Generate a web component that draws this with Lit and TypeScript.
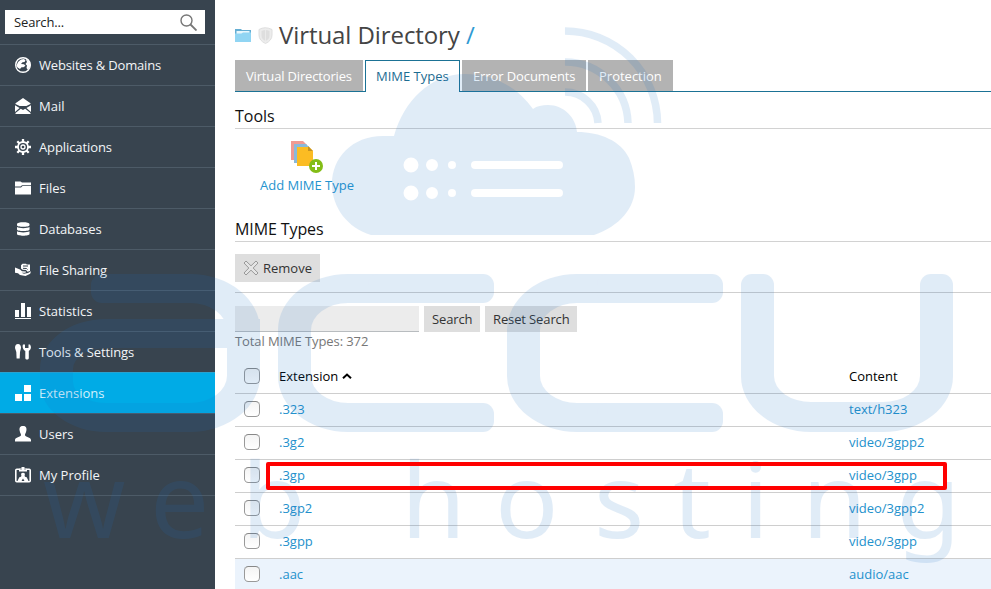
import { LitElement, html, css, svg } from "lit";
import { customElement } from "lit/decorators.js";
import { classMap } from "lit/directives/class-map.js";

const icons: Record<string, unknown> = {
  globe: svg`<circle cx="8" cy="8" r="7.300" fill="none" stroke="#fff" stroke-width="1.400"/><path d="M1.500 8.500L3 5l3-2.500 3-.5 1.500 1.500-1 1.500-2 .3-1.500 1.700 3 .3 1.500 1.500-2 1.500h-2L5 12l-2.500-1.500zM10.500 1.500L15 5l.5 4-2.500 4-1.500-2 .5-2.500-1.500-1.500 1.500-2z"/>`,
  mail: svg`<path d="M8 0L15.500 5.200V6L11.400 8H4.600L.5 6V5.200zM0 7.200L4.600 10 0 14zM16 7.200L11.400 10 16 14zM5.800 10.700L8 12l2.200-1.300L15.500 15v1H.5v-1z"/>`,
  gear: svg`<circle cx="8" cy="8" r="5" fill="none" stroke="#fff" stroke-width="1.800"/><circle cx="8" cy="8" r="2" fill="none" stroke="#fff" stroke-width="1.300"/><path d="M8 0v3M8 13v3M0 8h3M13 8h3M2.300 2.300l2.200 2.200M11.500 11.500l2.200 2.200M2.300 13.700l2.200-2.200M11.500 4.500l2.200-2.200" stroke="#fff" stroke-width="2.300"/>`,
  folder: svg`<path d="M0 1.500h5.500L7 2.500h9v2.700H7L5.500 6.500H0zM0 7.500h6L7.500 6H16v8.500H0z"/>`,
  database: svg`<path d="M2 3C2 .5 14.500.5 14.500 3v1.200c0 2-12.500 2-12.500 0zM2 6c2 1.500 10.500 1.500 12.500 0v2.500c0 2-12.500 2-12.500 0zM2 10.300c2 1.500 10.500 1.500 12.500 0V13c0 2.300-12.500 2.300-12.500 0z"/>`,
  share: svg`<path d="M0 5.500l5 2 2 1.700 4 .3-.5 1.200H6.500L9 11.800l4-.8 3-1.700-.8 2.500-4.700 2.200L5 13l-2-1.800L0 10.800z"/><path d="M6 3.300l1.500-1.500H11l.8.700H15v6.500l-2.500.8L11 8 7.500 7.800 6 6.500z"/><path d="M8 4h5M8 6.300l3.500.2 1 1" stroke="#38444f" fill="none"/>`,
  stats: svg`<path d="M0 7h4v7H0zM6 0h4v14H6zM12 4h4v10h-4zM0 15h16v1H0z"/>`,
  tools: svg`<path d="M3 0c2 0 3.200 1.800 3 4L5 8l-.3 6.500H1.600L1.300 8 0 4C0 1.500 1 0 3 0zM8 .5l2 0v3.500h3.500V.5H15c2 3 .5 5.500-1.200 6.500v7c0 2-3.500 2-3.500 0V7C8 5.500 7 3 8 .5z"/>`,
  blocks: svg`<path d="M9 0h7v7H9zM0 9h7v7H0zM9 9h7v7H9z"/>`,
  user: svg`<path d="M8 0c3 0 3.800 2 3.400 4.500C11 7 10 7.500 10 9c0 2 6 2 6 5v1.500H0V14c0-3 6-3 6-5 0-1.500-1-2-1.400-4.500C4.200 2 5 0 8 0z"/>`,
  profile: svg`<rect x=".8" y="2.300" width="14.400" height="12.500" rx="1" fill="none" stroke="#fff" stroke-width="1.600"/><path d="M4 1.800h2.500V0h3v1.800H12v2.700H4z"/><path d="M5.500 2.200h1M9.500 2.200h1" stroke="#38444f" stroke-width=".8"/><path d="M8 5.800c1.800 0 2.200 1.200 1.700 2.500-.4 1.200.3 1.500 2 2l1.800 3.700H9.500L8 11.500 6.500 14h-4l1.800-3.700c1.700-.5 2.400-.8 2-2C5.800 7 6.200 5.800 8 5.800z"/>`,
};

const nav: [string, string, string][] = [
  ["globe", "Websites & Domains", "tight"],
  ["mail", "Mail", ""],
  ["gear", "Applications", "snug"],
  ["folder", "Files", ""],
  ["database", "Databases", "snug"],
  ["share", "File Sharing", "tight"],
  ["stats", "Statistics", ""],
  ["tools", "Tools & Settings", "snug"],
  ["blocks", "Extensions", ""],
  ["user", "Users", ""],
  ["profile", "My Profile", ""],
];

const rows = [
  [".323", "text/h323"],
  [".3g2", "video/3gpp2"],
  [".3gp", "video/3gpp"],
  [".3gp2", "video/3gpp2"],
  [".3gpp", "video/3gpp"],
  [".aac", "audio/aac"],
];

@customElement("side-nav")
class SideNav extends LitElement {
  static styles = css`
    :host { display: block; box-sizing: border-box; width: 215px; flex: none; background: #38444f; padding-top: 10px; }
    .search { display: flex; align-items: center; justify-content: space-between; box-sizing: border-box; width: 200px; height: 24px; margin: 0 0 10px 5px; padding: 0 8px 0 9px; background: #fff; color: #222; letter-spacing: -0.15px; }
    .item { display: flex; align-items: center; box-sizing: border-box; height: 41px; padding-left: 15px; gap: 8px; border-top: 1px solid #4d5b67; color: #f3f5f7; }
    .item svg { width: 16px; height: 16px; fill: #fff; }
    .item.active { background: #00abe6; border-color: #29a2cf; color: #d2f1fc; }
    .tight { letter-spacing: -0.17px; }
    .snug { letter-spacing: -0.1px; }
    .end { border-top: 1px solid #4d5b67; }
  `;
  render() {
    return html`
      <div class="search"><span>Search...</span>
        <svg width="17" height="17" viewBox="0 0 17 17" fill="none" stroke="#777"><circle cx="6.500" cy="6.500" r="5.500" stroke-width="1.400"/><path d="M10.500 10.500l6 6" stroke-width="1.800"/></svg>
      </div>
      ${nav.map(([icon, label, fit]) => html`<div class=${classMap({ item: true, active: label === "Extensions" })}>
        <svg viewBox="0 0 16 16">${icons[icon]}</svg><span class=${fit}>${label}</span></div>`)}
      <div class="end"></div>`;
  }
}

@customElement("brand-watermark")
class BrandWatermark extends LitElement {
  static styles = css`
    :host { position: absolute; inset: 0; overflow: hidden; opacity: 0.13; pointer-events: none; color: #1b70c4; }
    svg { position: absolute; inset: 0; }
    .tagline { font-family: "Noto Sans", sans-serif; font-size: 105px; fill: currentColor; }
    .mark { position: absolute; top: 274px; height: 158px; }
    .mark div { position: absolute; box-sizing: border-box; border: 0 solid currentColor; }
    .m1 { left: 40px; width: 220px; }
    .m2 { left: 278px; width: 216px; }
    .m3 { left: 507px; width: 216px; }
    .m4 { left: 741px; width: 212px; }
    .bar { background: currentColor; height: 29px; left: 90px; right: 0; border-radius: 11px; }
    .bar.low { bottom: 0; }
    .hook { left: 0; top: 0; bottom: 0; width: 150px; }
    .mark .hook { border-width: 29px 0 29px 33px; border-radius: 70px 0 0 70px / 56px 0 0 56px; }
    .bowl { left: 0; top: 45px; right: 0; bottom: 0; }
    .mark .bowl { border-width: 29px 33px; border-radius: 66px 0 70px 66px / 50px 0 56px 50px; }
    .roof { left: 90px; top: 0; right: 0; height: 80px; }
    .mark .roof { border-width: 29px 33px 0 0; border-radius: 0 70px 0 0 / 0 56px 0 0; }
    .mark .cap { left: 51px; right: auto; width: 80px; }
    .cup { left: 0; right: 0; top: 50px; bottom: 0; }
    .mark .cup { border-width: 0 33px 30px; border-radius: 0 0 70px 70px / 0 0 56px 56px; }
    .post { background: currentColor; top: 0; width: 33px; height: 90px; border-radius: 11px 11px 0 0; }
    .post.r { right: 0; }
  `;
  render() {
    return html`
      <svg width="991" height="589" fill="currentColor">
        <path fill-rule="evenodd" d="M394 136C404 101 430 74 465 74C495 74 518 88 533 109C537 106 542 105 548 105C564 105 576 118 577 132C600 132 621 141 629 158C633 168 635 177 635 187C635 208 620 226 594 235H371C348 228 332 208 332 184C332 158 352 136 383 136Z
          M403.500 165a7.500 7.500 0 1 0 15 0a7.500 7.500 0 1 0-15 0zM426 165a6 6 0 1 0 12 0a6 6 0 1 0-12 0zM448 165a4 4 0 1 0 8 0a4 4 0 1 0-8 0zM475 161h84a4 4 0 0 1 0 8h-84a4 4 0 0 1 0-8z
          M403.500 193a7.500 7.500 0 1 0 15 0a7.500 7.500 0 1 0-15 0zM426 193a6 6 0 1 0 12 0a6 6 0 1 0-12 0zM448 193a4 4 0 1 0 8 0a4 4 0 1 0-8 0zM475 189h84a4 4 0 0 1 0 8h-84a4 4 0 0 1 0-8z"/>
        <g fill="none" stroke="currentColor" stroke-width="7.500"><path d="M565 31A92.500 92.500 0 0 1 657.500 123M565 62A63 63 0 0 1 628 123M565 92A33 33 0 0 1 598 123"/></g>
        <text class="tagline" y="538" x="43 150 241.500">web</text><text class="tagline" y="538" x="401 495 594 673 742 802 896">hosting</text>
      </svg>
      <div class="mark m1"><div class="bar cap"></div><div class="roof"></div><div class="bowl"></div></div>
      <div class="mark m2"><div class="hook"></div><div class="bar"></div><div class="bar low"></div></div>
      <div class="mark m3"><div class="hook"></div><div class="bar"></div><div class="bar low"></div></div>
      <div class="mark m4"><div class="post"></div><div class="post r"></div><div class="cup"></div></div>`;
  }
}

@customElement("app-root")
class AppRoot extends LitElement {
  static styles = css`
    :host { display: flex; position: relative; width: 991px; height: 589px; overflow: hidden; background: #fff; font: 13px/18px "Open Sans", sans-serif; color: #222; }
    main { flex: 1; min-width: 0; padding-left: 20px; }
    .title { display: flex; align-items: center; height: 60px; padding-top: 10px; box-sizing: border-box; font-size: 24px; line-height: 34px; letter-spacing: -0.08px; color: #444; white-space: pre; }
    .title svg { flex: none; }
    .title .shield { margin: 0 6px 0 6px; }
    .slash { color: #2f9ad3; }
    .tabs { display: flex; gap: 2px; height: 32px; box-sizing: border-box; border-bottom: 1px solid #1b7295; }
    .tab { box-sizing: border-box; height: 31px; padding: 7px 0 0 11px; background: #b3b3b3; color: #fff; white-space: nowrap; letter-spacing: -0.1px; }
    .tab.first { width: 128px; letter-spacing: -0.16px; }
    .tab.on { width: 95px; height: 32px; padding: 6px 0 0 10px; background: #fff; border: 1px solid #1b7295; border-bottom: 0; color: #1d6d92; letter-spacing: 0; }
    .tab.errors { width: 124px; }
    .tab.last { width: 85px; letter-spacing: 0; }
    h2 { margin: 0; box-sizing: border-box; font-weight: 400; font-size: 16px; line-height: 24px; color: #111; border-bottom: 1px solid #d2d2d2; }
    .tools-h { height: 37px; padding-top: 12px; }
    .types-h { height: 25px; letter-spacing: -0.1px; }
    .tool { display: flex; flex-direction: column; align-items: center; width: 144px; height: 88px; box-sizing: border-box; padding-top: 11px; color: #2594cf; }
    .tool svg { margin-bottom: 2px; }
    .btn { display: inline-flex; align-items: center; box-sizing: border-box; background: #dedede; color: #333; padding: 0 0 0 8px; white-space: nowrap; }
    .bar { height: 51px; box-sizing: border-box; padding-top: 12px; border-bottom: 1px solid #cfcfcf; }
    .bar .btn { width: 85px; height: 28px; gap: 4px; }
    .find { display: flex; gap: 5px; padding-top: 13px; letter-spacing: -0.12px; }
    .find .btn { height: 26px; width: 56px; }
    .find .btn.reset { width: 92px; }
    .field { box-sizing: border-box; width: 184px; height: 26px; background: #ececec; border-bottom: 1px solid #b8bcbf; }
    .total { height: 28px; color: #777; letter-spacing: -0.1px; }
    .row { display: grid; grid-template-columns: 44px 570px 1fr; align-items: center; box-sizing: border-box; height: 33px; padding-bottom: 2px; border-bottom: 1px solid #cecece; color: #2391cc; }
    .head { color: #000; height: 34px; }
    .head span { display: flex; align-items: center; gap: 4px; }
    .alt { background: #ebf3fc; }
    .box { box-sizing: border-box; width: 16px; height: 16px; margin-left: 9px; border: 1px solid #999; border-top-color: #888; border-radius: 4.500px; background: linear-gradient(#f4f4f4, #fff); }
    .mark { position: absolute; left: 266px; top: 462px; width: 681px; height: 28px; box-sizing: border-box; border: 4px solid #ff0000; border-radius: 2px; z-index: 1; }
  `;
  render() {
    return html`
      <side-nav></side-nav>
      <main>
        <div class="title"><svg width="17" height="15" viewBox="0 0 17 15"><path d="M0 1h6l1 1h9v4H0z" fill="#64aed3"/><path d="M1.500 3h13v3h-13z" fill="#e8f7fd"/><path d="M0 5.500h6.500L8 4.500h8V14H0z" fill="#91d5f3"/></svg><svg class="shield" width="15" height="17" viewBox="0 0 15 17"><path d="M1 2.500Q7-1 14 2.500V8q0 5.500-6.500 8.500Q1 13.500 1 8z" fill="#ececec" stroke="#dedede"/><path d="M3.500 4q4-2 8 0v5q0 3-4 5-4-2-4-5z" fill="#dedede"/><path d="M7.500 3v11" stroke="#eaeaea"/></svg><span>Virtual Directory <span class="slash">/</span></span></div>
        <div class="tabs"><div class="tab first">Virtual Directories</div><div class="tab on">MIME Types</div><div class="tab errors">Error Documents</div><div class="tab last">Protection</div></div>
        <h2 class="tools-h">Tools</h2>
        <div class="tool"><svg width="32" height="34" viewBox="0 0 32 34"><g transform="translate(-1 0)"><path d="M1 1h12l4 4v15H1z" fill="#f09a92"/><path d="M4 4h12l4 4v15H4z" fill="#8ab9da"/><path d="M7 7h12l4 4v15H7z" fill="#fbbc23"/><path d="M18 6l5 5h-5z" fill="#c69320"/></g><circle cx="25" cy="26" r="7" fill="#83bd17"/><path d="M25 22v8M21 26h8" stroke="#fff" stroke-width="2"/></svg><span>Add MIME Type</span></div>
        <h2 class="types-h">MIME Types</h2>
        <div class="bar"><div class="btn"><svg width="16" height="16" viewBox="0 0 16 16"><path d="M3 1l5 4.800L13 1l2 2-4.800 5 4.800 5-2 2-5-4.800L3 15l-2-2 4.800-5L1 3z" fill="#e4e4e4" stroke="#999" stroke-linejoin="round"/></svg>Remove</div></div>
        <div class="find"><div class="field"></div><div class="btn">Search</div><div class="btn reset">Reset Search</div></div>
        <div class="total">Total MIME Types: 372</div>
        <div class="row head"><i class="box"></i><span>Extension <svg width="10" height="6" viewBox="0 0 10 6"><path d="M1 5.200L5 1.500l4 3.700" fill="none" stroke="#000" stroke-width="2"/></svg></span><span>Content</span></div>
        ${rows.map(([ext, type], i) => html`<div class=${classMap({ row: true, alt: i === 5 })}><i class="box"></i><span>${ext}</span><span>${type}</span></div>`)}
      </main>
      <div class="mark"></div>
      <brand-watermark></brand-watermark>`;
  }
}
